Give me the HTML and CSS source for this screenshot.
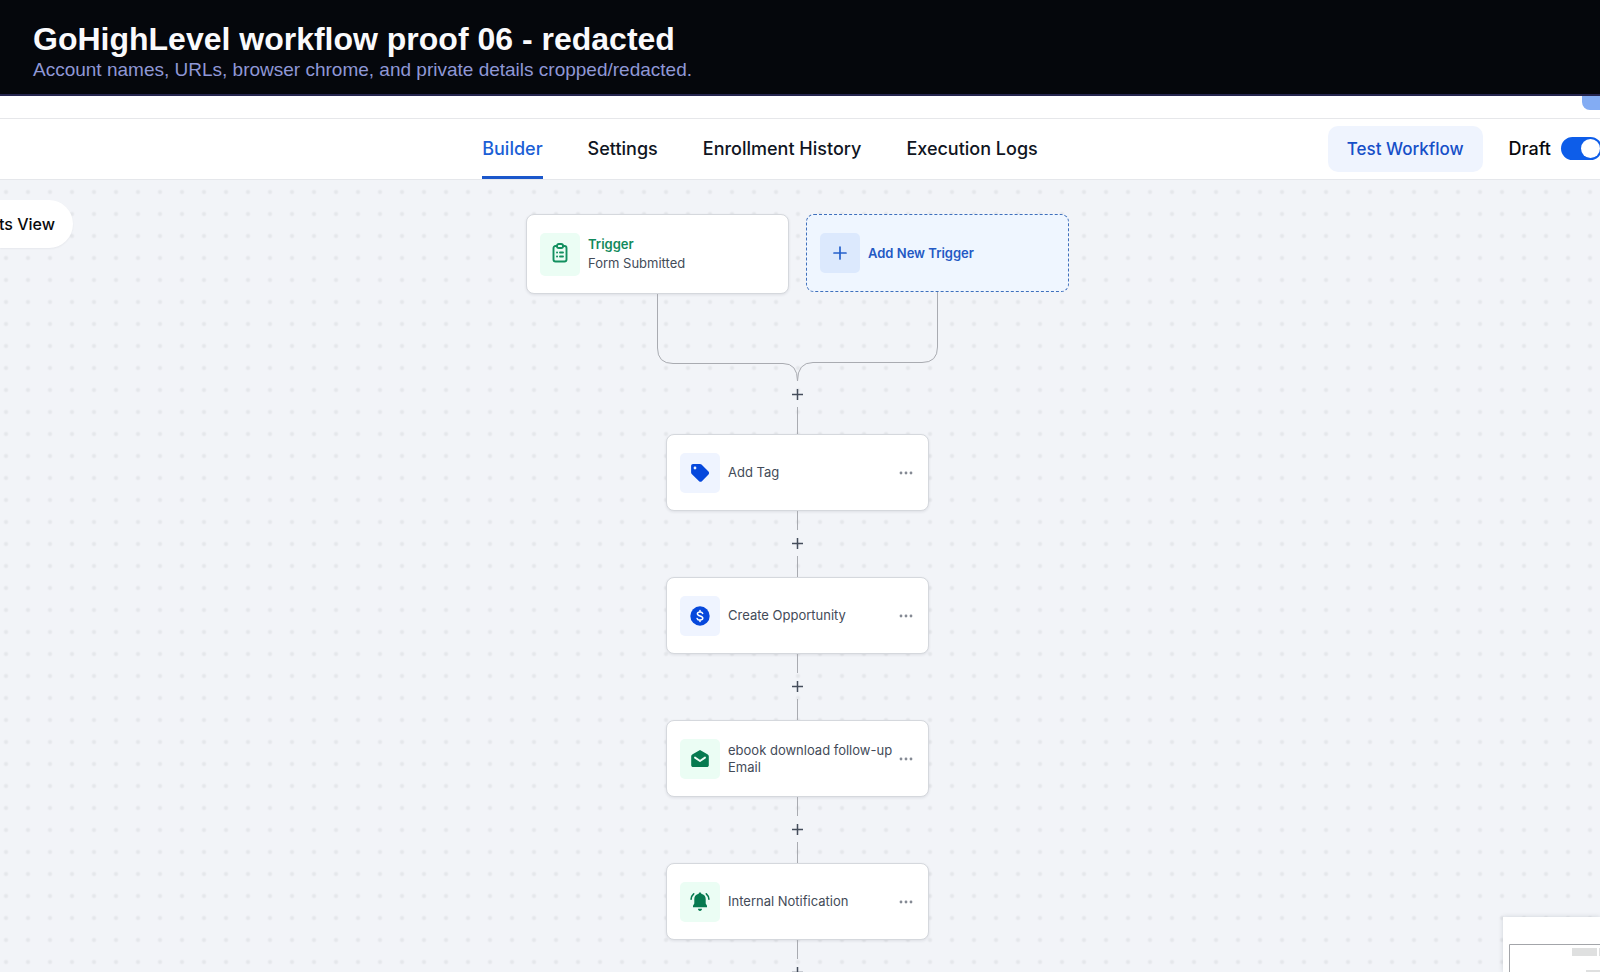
FILE: index.html
```html
<!DOCTYPE html>
<html lang="en">
<head>
<meta charset="utf-8">
<title>Workflow builder</title>
<link rel="stylesheet" href="styles.css">
</head>
<body>
<div class="app">
  <header class="banner">
    <h1 class="banner-title">GoHighLevel workflow proof 06 - redacted</h1>
    <p class="banner-note">Account names, URLs, browser chrome, and private details cropped/redacted.</p>
  </header>

  <div class="strip"><button class="strip-button" type="button" aria-label="Save"></button></div>

  <div class="toolbar">
    <nav class="tabs">
      <a class="tab tab-active" href="#builder">Builder</a>
      <a class="tab" href="#settings">Settings</a>
      <a class="tab" href="#enrollment">Enrollment History</a>
      <a class="tab" href="#logs">Execution Logs</a>
    </nav>
    <div class="actions">
      <button class="test-button" type="button">Test Workflow</button>
      <label class="draft" for="publish">Draft</label>
      <input class="switch" id="publish" type="checkbox" role="switch" checked>
    </div>
  </div>

  <main class="canvas">
    <button class="view-pill" type="button">ts View</button>

    <div class="flow">
      <div class="triggers">
        <article class="card trigger">
          <span class="tile tile-green">
            <svg width="20" height="22" viewBox="0 0 20 22" fill="none" stroke="#12905f" stroke-width="1.9" stroke-linecap="round" stroke-linejoin="round"><path d="M7 3H5.500a2 2 0 0 0-2 2v11.500a2 2 0 0 0 2 2h9a2 2 0 0 0 2-2V5a2 2 0 0 0-2-2H13"/><rect x="7" y="1" width="6" height="4" rx="1.800"/><path d="M7 9.500h.1M10 9.500h3M7 13.500h.1M10 13.500h3"/></svg>
          </span>
          <div class="trigger-text">
            <strong class="trigger-kind">Trigger</strong>
            <span class="label">Form Submitted</span>
          </div>
        </article>
        <button class="card add-trigger" type="button">
          <span class="tile tile-sky">
            <svg width="14" height="14" viewBox="0 0 14 14" stroke="#2460cc" stroke-width="1.700" stroke-linecap="round"><path d="M7 1v12M1 7h12"/></svg>
          </span>
          Add New Trigger
        </button>
      </div>

      <svg class="merge" width="281" height="89" viewBox="0 0 281 89" fill="none" stroke="#a9abb1"><path d="M.5 2V56Q.5 71.500 16 71.500H126Q140.500 71.500 140.500 89"/><path d="M280.500 0V55Q280.500 70.500 265 70.500H156Q140.500 70.500 140.500 89"/></svg>
      <button class="add-step" type="button" aria-label="Add step"><svg width="13" height="13" viewBox="0 0 13 13"><path d="M6.500 1v11M1 6.500h11"/></svg></button>
      <span class="line line-long"></span>

      <article class="card">
        <span class="tile tile-blue">
          <svg width="20" height="20" viewBox="0 0 20 20"><path fill="#0648dc" fill-rule="evenodd" d="M3 1h7c.6 0 1.100.2 1.500.6l7 7c.8.8.8 2 0 2.800l-6.600 6.800c-.8.800-2 .8-2.800 0L1.700 11c-.4-.4-.6-.9-.6-1.500V3c0-1.100.8-2 1.900-2zm2 2.600a1.400 1.400 0 1 0 0 2.800 1.400 1.400 0 0 0 0-2.800z"/></svg>
        </span>
        <span class="label">Add Tag</span>
        <button class="more" type="button" aria-label="More"><svg width="14" height="4" viewBox="0 0 14 4"><circle cx="2" cy="2" r="1.400"/><circle cx="7" cy="2" r="1.400"/><circle cx="12" cy="2" r="1.400"/></svg></button>
      </article>

      <span class="line line-in"></span>
      <button class="add-step" type="button" aria-label="Add step"><svg width="13" height="13" viewBox="0 0 13 13"><path d="M6.500 1v11M1 6.500h11"/></svg></button>
      <span class="line"></span>

      <article class="card">
        <span class="tile tile-blue">
          <svg width="20" height="20" viewBox="0 0 20 20"><circle cx="10" cy="10" r="9.700" fill="#0648dc"/><path fill="none" stroke="#fff" stroke-width="1.500" stroke-linecap="round" d="M12.700 7.400C12.300 6.300 11.300 5.900 10 5.900c-1.500 0-2.600.7-2.600 1.900 0 2.900 5.400 1.400 5.400 4.300 0 1.300-1.200 2-2.800 2-1.500 0-2.500-.6-2.900-1.700M10 4.400v1.500M10 14.100v1.500"/></svg>
        </span>
        <span class="label">Create Opportunity</span>
        <button class="more" type="button" aria-label="More"><svg width="14" height="4" viewBox="0 0 14 4"><circle cx="2" cy="2" r="1.400"/><circle cx="7" cy="2" r="1.400"/><circle cx="12" cy="2" r="1.400"/></svg></button>
      </article>

      <span class="line line-in"></span>
      <button class="add-step" type="button" aria-label="Add step"><svg width="13" height="13" viewBox="0 0 13 13"><path d="M6.500 1v11M1 6.500h11"/></svg></button>
      <span class="line"></span>

      <article class="card">
        <span class="tile tile-green">
          <svg width="20" height="20" viewBox="0 0 20 20"><path fill="#077a50" d="M10 1l7.400 4.200c.9.500 1.400 1.200 1.400 2.200v8.800c0 1.100-.8 1.900-1.900 1.900H3.100c-1.100 0-1.900-.8-1.900-1.900V7.400c0-1 .5-1.700 1.400-2.200z"/><path fill="none" stroke="#effdf6" stroke-width="1.900" stroke-linecap="round" stroke-linejoin="round" d="M5 8.600l5 3.400 5-3.400"/></svg>
        </span>
        <span class="label">ebook download follow-up Email</span>
        <button class="more" type="button" aria-label="More"><svg width="14" height="4" viewBox="0 0 14 4"><circle cx="2" cy="2" r="1.400"/><circle cx="7" cy="2" r="1.400"/><circle cx="12" cy="2" r="1.400"/></svg></button>
      </article>

      <span class="line line-in"></span>
      <button class="add-step" type="button" aria-label="Add step"><svg width="13" height="13" viewBox="0 0 13 13"><path d="M6.500 1v11M1 6.500h11"/></svg></button>
      <span class="line"></span>

      <article class="card">
        <span class="tile tile-green">
          <svg width="20" height="20" viewBox="0 0 20 20"><path fill="#077a50" d="M10 .5c.8 0 1.300.5 1.300 1.300 2.700.6 4.400 2.500 4.400 5.200v4.500l1.300 2.300v1.400H3v-1.400l1.300-2.300V7c0-2.700 1.700-4.600 4.400-5.200C8.700 1 9.200.5 10 .5zM8 16.800h4c0 1.300-.8 2.100-2 2.100s-2-.8-2-2.100z"/><path fill="none" stroke="#077a50" stroke-width="1.600" stroke-linecap="round" d="M3.700 1.800C2.100 3.100 1.200 5 1.100 7.300M16.300 1.800c1.600 1.300 2.500 3.200 2.600 5.500"/></svg>
        </span>
        <span class="label">Internal Notification</span>
        <button class="more" type="button" aria-label="More"><svg width="14" height="4" viewBox="0 0 14 4"><circle cx="2" cy="2" r="1.400"/><circle cx="7" cy="2" r="1.400"/><circle cx="12" cy="2" r="1.400"/></svg></button>
      </article>

      <span class="line line-in"></span>
      <button class="add-step" type="button" aria-label="Add step"><svg width="13" height="13" viewBox="0 0 13 13"><path d="M6.500 1v11M1 6.500h11"/></svg></button>
    </div>

    <aside class="minimap">
      <svg class="minimap-view" width="120" height="60" viewBox="0 0 120 60"><path fill="none" stroke="#a3a5a9" d="M.5 60V.5H120"/><path fill="#dfe0e0" d="M63 4h25v8H63zM90 4h25v8H90zM77 26h25v8H77z"/></svg>
    </aside>
  </main>
</div>
</body>
</html>
```
FILE: styles.css
```css
* {
  box-sizing: border-box;
}

body {
  margin: 0;
  font-family: Inter, "Liberation Sans", sans-serif;
  color: #101522;
}

button {
  margin: 0;
  padding: 0;
  border: 0;
  background: none;
  font: inherit;
  color: inherit;
  cursor: pointer;
}

.app {
  display: flex;
  flex-direction: column;
  height: 100vh;
  overflow: hidden;
  background: #fff;
}

.banner {
  flex: none;
  padding: 20px 33px 12px;
  border-bottom: 2px solid #25254f;
  background: #05070c;
  font-family: "Liberation Sans", Arial, sans-serif;
}

.banner-title {
  margin: 0;
  font-size: 32px;
  line-height: 38px;
  color: #fafafc;
}

.banner-note {
  margin: 0;
  font-size: 19px;
  line-height: 24px;
  color: #8f97d6;
}

.strip {
  flex: none;
  display: flex;
  justify-content: flex-end;
  height: 23px;
  border-bottom: 1px solid #e6e7ea;
}

.strip-button {
  width: 18px;
  height: 14px;
  border-radius: 0 0 0 8px;
  background: #83acf3;
}

.toolbar {
  flex: none;
  display: grid;
  grid-template-columns: 482fr auto 562fr;
  height: 61px;
  border-bottom: 1px solid #e5e7eb;
}

.tabs {
  grid-column: 2;
  display: flex;
  gap: 45px;
}

.tab {
  padding-top: 18px;
  border-bottom: 3px solid transparent;
  font-size: 18px;
  line-height: 24px;
  font-weight: 500;
  color: #101522;
  text-decoration: none;
}

.tab-active {
  border-color: #1b57cb;
  color: #1b5fd6;
}

.actions {
  display: flex;
  align-items: center;
  justify-content: flex-end;
  padding-bottom: 1px;
  overflow: hidden;
}

.test-button {
  height: 46px;
  margin-right: 26px;
  padding: 0 19px;
  border-radius: 10px;
  background: #eff4fe;
  font-size: 17px;
  font-weight: 500;
  color: #164fc8;
}

.draft {
  margin-right: 10px;
  font-size: 18px;
  font-weight: 500;
  color: #08090c;
}

.switch {
  appearance: none;
  flex: none;
  display: flex;
  justify-content: flex-end;
  width: 41px;
  height: 23px;
  margin: 0 -2px 0 0;
  padding: 2px;
  border-radius: 12px;
  background: #0d5de9;
}

.switch::before {
  content: "";
  width: 19px;
  height: 19px;
  border-radius: 50%;
  background: #fff;
}

.canvas {
  flex: 1;
  position: relative;
  min-height: 0;
  overflow: hidden;
  background: #f2f4f8 radial-gradient(circle, #e5e7eb 1px, #e5e7eb00 3px) -5px 1px / 22px 22px;
}

.view-pill {
  position: absolute;
  top: 20px;
  left: 0;
  display: flex;
  align-items: center;
  justify-content: flex-end;
  width: 73px;
  height: 48px;
  padding-right: 18px;
  border-radius: 0 24px 24px 0;
  background: #fff;
  box-shadow: 0 1px 2px #1018280d;
  font-size: 16px;
  font-weight: 500;
  white-space: nowrap;
  color: #08090c;
}

.flow {
  display: flex;
  flex-direction: column;
  align-items: center;
  padding: 34px 5px 0 0;
}

.triggers {
  display: flex;
  align-items: flex-start;
  gap: 17px;
}

.card {
  flex: none;
  display: flex;
  align-items: center;
  gap: 8px;
  width: 263px;
  height: 77px;
  padding: 0 13px;
  border: 1px solid #d5d8dd;
  border-radius: 8px;
  background: #fff;
  box-shadow: 0 1px 3px #10182818;
}

.trigger {
  height: 80px;
}

.add-trigger {
  height: 78px;
  border: 1px dashed #3f70bd;
  background: #eff6ff;
  box-shadow: none;
  font-size: 13px;
  font-weight: 600;
  color: #2459c4;
}

.tile {
  flex: none;
  display: flex;
  align-items: center;
  justify-content: center;
  width: 40px;
  height: 40px;
  border-radius: 5px;
}

.trigger .tile {
  height: 43px;
}

.tile-green {
  background: #ebfdf4;
}

.tile-sky {
  background: #dce9fd;
}

.tile-blue {
  background: #eff4ff;
}

.trigger-text {
  display: flex;
  flex-direction: column;
  gap: 3px;
}

.trigger-kind {
  font-size: 13px;
  line-height: 16px;
  font-weight: 600;
  color: #128a5c;
}

.label {
  flex: 1;
  font-size: 13px;
  line-height: 17px;
  color: #434b58;
}

.more {
  flex: none;
  display: flex;
  width: 14px;
  margin: 0 2px 0 -11px;
  padding: 8px 0;
  fill: #858a94;
}

.merge {
  flex: none;
  margin-top: -2px;
}

.line {
  flex: none;
  width: 1px;
  height: 21px;
  background: #a9abb1;
}

.line-in {
  height: 19px;
}

.line-long {
  height: 27px;
}

.add-step {
  flex: none;
  display: flex;
  align-items: center;
  justify-content: center;
  width: 27px;
  height: 26px;
  stroke: #454d5b;
  stroke-width: 1.5px;
}

.minimap {
  position: absolute;
  right: 0;
  bottom: 0;
  width: 97px;
  height: 55px;
  padding: 27px 0 0 6px;
  overflow: hidden;
  background: #fff;
  box-shadow: 0 0 5px #10182826;
}

.minimap-view {
  display: block;
}
```
